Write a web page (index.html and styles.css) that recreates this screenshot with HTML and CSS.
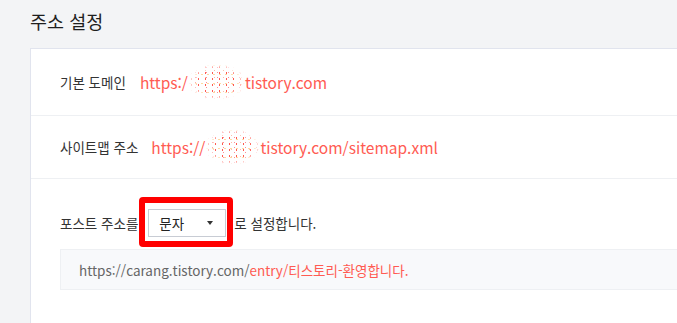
FILE: index.html
```html
<!DOCTYPE html>
<html lang="ko">
<head>
<meta charset="utf-8">
<link rel="stylesheet" href="styles.css">
</head>
<body>
<div class="page">
  <h2 class="title">주소 설정</h2>
  <div class="card">
    <div class="row row-domain">
      <span class="label">기본 도메인</span>
      <span class="url">https:/<span class="scribble s1"></span>tistory.com</span>
    </div>
    <div class="row row-sitemap">
      <span class="label">사이트맵 주소</span>
      <span class="url">https://<span class="scribble s2"></span>tistory.com/sitemap.xml</span>
    </div>
    <div class="row row-post">
      <div class="post-line">
        <span class="label">포스트 주소를</span>
        <span class="select-wrap">
          <span class="select"><span class="select-text">문자</span><span class="caret"></span></span>
          <span class="highlight"></span>
        </span>
        <span class="label">로 설정합니다.</span>
      </div>
      <div class="example">
        <span class="ex-base">https://carang.tistory.com/</span><span class="ex-accent">entry/티스토리-환영합니다.</span>
      </div>
    </div>
  </div>
</div>
</body>
</html>
```

FILE: styles.css
```css
html, body {
  margin: 0;
  padding: 0;
  background: #f3f4f6;
  overflow: hidden;
  font-family: "Noto Sans CJK KR", "Noto Sans", sans-serif;
}

.page {
  padding-left: 30px;
  height: 100vh;
  box-sizing: border-box;
  display: flex;
  flex-direction: column;
}

.title {
  margin: 0;
  padding-top: 8px;
  font-size: 18.5px;
  line-height: 26px;
  font-weight: 400;
  color: #1e1e1e;
}

.card {
  margin-top: 14px;
  flex: 1;
  background: #fff;
  border-top: 1px solid #e1e4ee;
  border-left: 1px solid #e1e4ee;
}

.row {
  padding-left: 29px;
  border-bottom: 1px solid #eef0f3;
  display: flex;
  align-items: center;
}

.row-domain {
  height: 66px;
}

.row-sitemap {
  height: 62px;
}

.row-post {
  border-bottom: none;
  display: block;
  padding-top: 30px;
}

.label {
  font-size: 13.5px;
  color: #333;
}

.url {
  font-size: 15.5px;
  color: #ff5b52;
  display: inline-flex;
  align-items: center;
}

.row-domain .url {
  margin-left: 14px;
}

.row-sitemap .url {
  margin-left: 13px;
}

.scribble {
  display: inline-block;
  height: 36px;
  margin: -5px 0;
  background-image:
    radial-gradient(circle, rgba(255, 70, 60, 0.9) 0.7px, transparent 1px),
    radial-gradient(circle, rgba(255, 175, 150, 0.85) 0.7px, transparent 1px),
    radial-gradient(circle, rgba(255, 110, 120, 0.8) 0.7px, transparent 1px),
    radial-gradient(circle, rgba(255, 200, 120, 0.7) 0.7px, transparent 1px);
  background-size: 7px 6px, 9px 7px, 11px 5px, 6px 9px;
  background-position: 0 0, 4px 3px, 2px 1px, 5px 6px;
  -webkit-mask-image: radial-gradient(ellipse at center, #000 45%, transparent 72%);
  mask-image: radial-gradient(ellipse at center, #000 45%, transparent 72%);
}

.s1 {
  width: 57px;
}

.s2 {
  width: 55px;
}

.post-line {
  display: flex;
  align-items: center;
  height: 28px;
}

.select-wrap {
  position: relative;
  margin: 0 8px 0 10px;
  display: inline-block;
}

.select {
  display: flex;
  align-items: center;
  justify-content: space-between;
  box-sizing: border-box;
  width: 78px;
  height: 28px;
  padding: 0 12px 0 10px;
  border: 1px solid #c8ccd4;
  background: #fff;
}

.select-text {
  font-size: 13.5px;
  color: #222;
}

.caret {
  width: 0;
  height: 0;
  border-left: 3px solid transparent;
  border-right: 3px solid transparent;
  border-top: 4px solid #333;
}

.highlight {
  position: absolute;
  left: -9px;
  top: -12px;
  right: -7px;
  bottom: -10px;
  border: 6px solid #ff0000;
  border-radius: 4px;
}

.example {
  margin-top: 12px;
  box-sizing: border-box;
  height: 41px;
  border: 1px solid #eef0f3;
  border-right: none;
  background: #f8f9fb;
  padding-left: 18px;
  display: flex;
  align-items: center;
  font-size: 13.5px;
}

.ex-base {
  color: #666;
}

.ex-accent {
  color: #ff5b52;
}
```
